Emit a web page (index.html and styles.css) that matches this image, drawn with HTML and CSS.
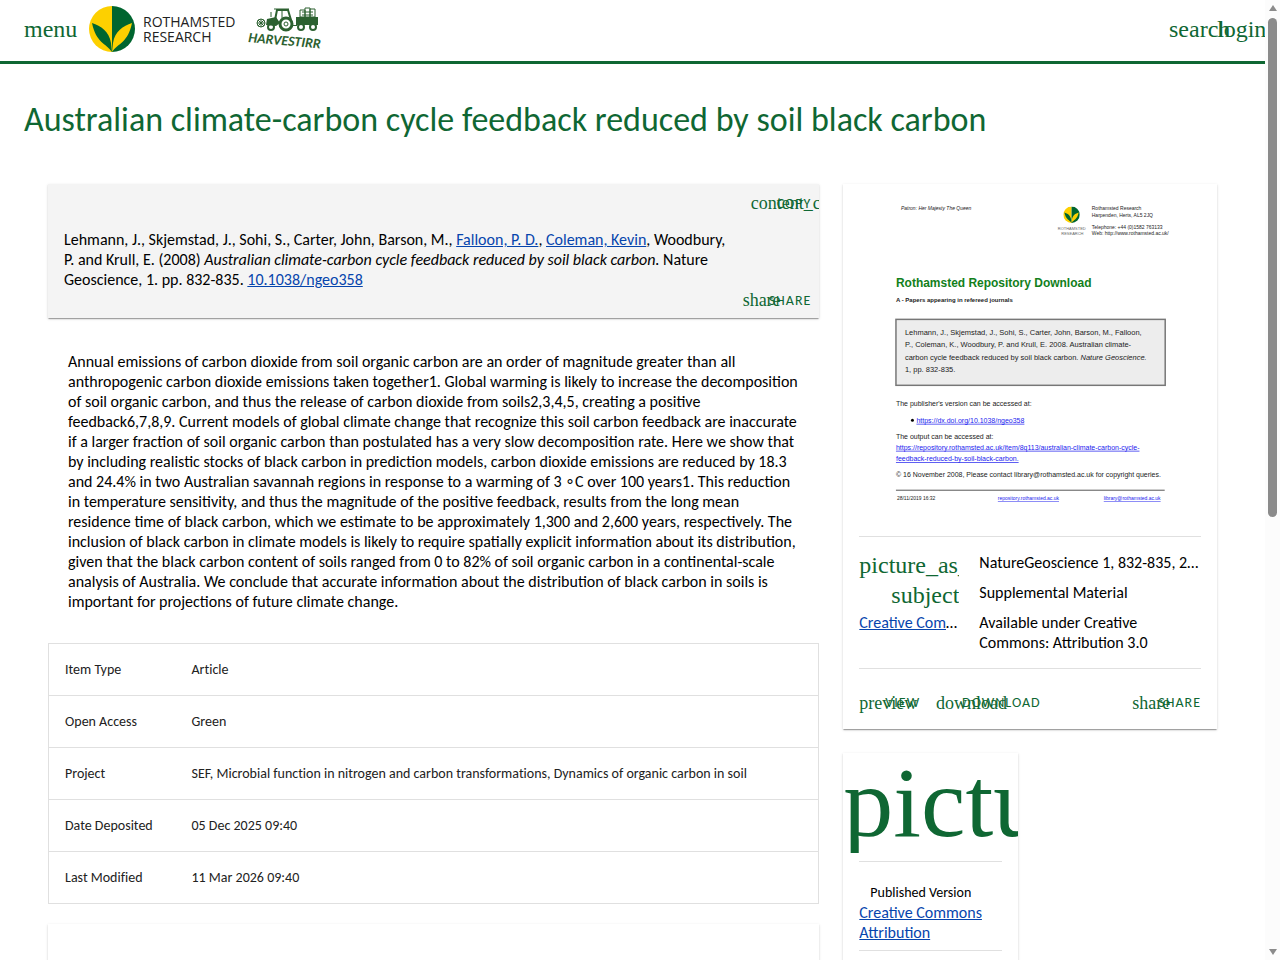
FILE: index.html
```
<!DOCTYPE html>
<html lang="en">
<head>
    <meta charset="UTF-8">
    <title>Australian climate-carbon cycle feedback reduced by soil black carbon</title>
    <link rel="stylesheet" href="styles.css">
</head>
<body>
<div class="page">
    <header class="top-bar">
        <button class="icon-button" aria-label="Menu"><span class="icon">menu</span></button>
        <a class="brand" href="#">
            <svg class="brand-mark" viewBox="0 0 46 46" aria-hidden="true">
                <path fill="#fdd000" d="M23 0a23 23 0 0 0 0 46z"/>
                <path fill="#00652f" d="M23 0a23 23 0 0 1 0 46z"/>
                <path fill="#00652f" d="M3 17c9 3 17 8 19 20l1 9C17 37 7 37 3 17z"/>
                <path fill="#fdd000" d="M43 17c-9 3-17 8-19 20l-1 9c6-9 16-9 20-29z"/>
            </svg>
            <span class="brand-name">ROTHAMSTED<br>RESEARCH</span>
        </a>
        <a class="harvest" href="#" aria-label="Harvestirr">
            <svg viewBox="0 0 72 44" aria-hidden="true">
                <g fill="none" stroke="#2c6130">
                    <path stroke-width="2" d="M28 13l2-10h11l3 10"/>
                    <path d="M27 2h15M35 3v8M24 5v5"/>
                    <circle cx="39" cy="17" r="6" stroke-width="3"/>
                    <circle cx="39" cy="17" r="2"/>
                    <circle cx="24" cy="20" r="3" stroke-width="2"/>
                    <circle cx="14" cy="16" r="4"/>
                    <path d="M10 16h8M14 12v8M11 13l6 6M17 13l-6 6"/>
                    <path d="M53 3h5v7h-5zM58 1h5v9h-5zM63 2h5v8h-5zM55 5h11M55 8h11"/>
                    <circle cx="54" cy="20" r="3" stroke-width="2"/>
                    <circle cx="66" cy="20" r="3" stroke-width="2"/>
                </g>
                <path fill="#2c6130" d="M20 12l9-2 4 6-4 3-10-1zM49 10h22v8H49zM44 18h6v1h-6z"/>
                <text class="harvest-text" x="1" y="35" transform="rotate(5 1 35)">HARVESTIRR</text>
            </svg>
        </a>
        <div class="spacer"></div>
        <button class="icon-button" aria-label="Search"><span class="icon">search</span></button>
        <button class="icon-button" aria-label="Login"><span class="icon">login</span></button>
    </header>

    <main>
        <h1>Australian climate-carbon cycle feedback reduced by soil black carbon</h1>

        <div class="grid">
            <div class="main-col">
                <section class="card citation">
                    <button class="button"><span class="icon">content_copy</span><span class="label">Copy</span></button>
                    <p>
                        Lehmann, J., Skjemstad, J., Sohi, S., Carter, John, Barson, M., <a href="#">Falloon, P. D.</a>, <a href="#">Coleman, Kevin</a>, Woodbury, P. and Krull, E. (2008) <em>Australian climate-carbon cycle feedback reduced by soil black carbon.</em> Nature Geoscience, 1. pp. 832-835. <a href="#">10.1038/ngeo358</a>
                    </p>
                    <button class="button"><span class="icon">share</span><span class="label">Share</span></button>
                </section>

                <p class="abstract">
                    Annual emissions of carbon dioxide from soil organic carbon are an order of magnitude greater than all anthropogenic carbon dioxide emissions taken together1. Global warming is likely to increase the decomposition of soil organic carbon, and thus the release of carbon dioxide from soils2,3,4,5, creating a positive feedback6,7,8,9. Current models of global climate change that recognize this soil carbon feedback are inaccurate if a larger fraction of soil organic carbon than postulated has a very slow decomposition rate. Here we show that by including realistic stocks of black carbon in prediction models, carbon dioxide emissions are reduced by 18.3 and 24.4% in two Australian savannah regions in response to a warming of 3 ∘C over 100 years1. This reduction in temperature sensitivity, and thus the magnitude of the positive feedback, results from the long mean residence time of black carbon, which we estimate to be approximately 1,300 and 2,600 years, respectively. The inclusion of black carbon in climate models is likely to require spatially explicit information about its distribution, given that the black carbon content of soils ranged from 0 to 82% of soil organic carbon in a continental-scale analysis of Australia. We conclude that accurate information about the distribution of black carbon in soils is important for projections of future climate change.
                </p>

                <table class="details">
                    <tr><th scope="row">Item Type</th><td>Article</td></tr>
                    <tr><th scope="row">Open Access</th><td>Green</td></tr>
                    <tr><th scope="row">Project</th><td>SEF, Microbial function in nitrogen and carbon transformations, Dynamics of organic carbon in soil</td></tr>
                    <tr><th scope="row">Date Deposited</th><td>05 Dec 2025 09:40</td></tr>
                    <tr><th scope="row">Last Modified</th><td>11 Mar 2026 09:40</td></tr>
                </table>

                <section class="card metrics"></section>
            </div>

            <div class="side-col">
                <section class="card document">
                    <svg class="cover" viewBox="0 0 748 704" role="img" aria-label="Cover page">
                        <g class="small">
                            <text x="116" y="53" font-style="italic">Patron: Her Majesty The Queen</text>
                            <text x="498" y="53">Rothamsted Research</text>
                            <text x="498" y="66">Harpenden, Herts, AL5 2JQ</text>
                            <text x="498" y="90">Telephone: +44 (0)1582 763133</text>
                            <text x="498" y="103">Web: http://www.rothamsted.ac.uk/</text>
                        </g>
                        <g class="tiny">
                            <text x="430" y="92">ROTHAMSTED</text>
                            <text x="437" y="102">RESEARCH</text>
                        </g>
                        <svg x="441" y="45" width="33" height="33" viewBox="0 0 46 46">
                            <path fill="#fdd000" d="M23 0a23 23 0 0 0 0 46z"/>
                            <path fill="#00652f" d="M23 0a23 23 0 0 1 0 46z"/>
                            <path fill="#00652f" d="M3 17c9 3 17 8 19 20l1 9C17 37 7 37 3 17z"/>
                            <path fill="#fdd000" d="M43 17c-9 3-17 8-19 20l-1 9c6-9 16-9 20-29z"/>
                        </svg>
                        <text class="cover-title" x="106" y="207">Rothamsted Repository Download</text>
                        <text class="cover-sub" x="106" y="237">A - Papers appearing in refereed journals</text>
                        <rect x="106" y="271" width="539" height="132" fill="#ededed" stroke="#777" stroke-width="3"/>
                        <g class="body">
                            <text x="124" y="303">Lehmann, J., Skjemstad, J., Sohi, S., Carter, John, Barson, M., Falloon,</text>
                            <text x="124" y="327">P., Coleman, K., Woodbury, P. and Krull, E. 2008. Australian climate-</text>
                            <text x="124" y="352">carbon cycle feedback reduced by soil black carbon. <tspan font-style="italic">Nature Geoscience.</tspan></text>
                            <text x="124" y="377">1, pp. 832-835.</text>
                        </g>
                        <g class="note">
                            <text x="106" y="444">The publisher's version can be accessed at:</text>
                            <circle cx="139" cy="473" r="3"/>
                            <text class="url" x="147" y="478">https://dx.doi.org/10.1038/ngeo358</text>
                            <text x="106" y="510">The output can be accessed at:</text>
                            <text class="url" x="106" y="532">https://repository.rothamsted.ac.uk/item/8q113/australian-climate-carbon-cycle-</text>
                            <text class="url" x="106" y="555">feedback-reduced-by-soil-black-carbon.</text>
                            <text x="106" y="587">© 16 November 2008, Please contact library@rothamsted.ac.uk for copyright queries.</text>
                        </g>
                        <path d="M106 613h538" stroke="#555" stroke-width="2"/>
                        <g class="small">
                            <text x="108" y="633">28/11/2019 16:32</text>
                            <text class="url" x="310" y="633">repository.rothamsted.ac.uk</text>
                            <text class="url" x="522" y="633">library@rothamsted.ac.uk</text>
                        </g>
                    </svg>
                    <hr>
                    <div class="files">
                        <a class="file-icon" href="#">picture_as_pdf</a>
                        <span class="ellipsis">NatureGeoscience 1, 832-835, 2008.pdf</span>
                        <a class="file-icon" href="#">subject</a>
                        <span>Supplemental Material</span>
                        <span class="ellipsis"><a href="#">Creative Com</a>mons: Attribution</span>
                        <span>Available under Creative Commons: Attribution 3.0</span>
                    </div>
                    <hr>
                    <div class="actions">
                        <button class="button"><span class="icon">preview</span><span class="label">View</span></button>
                        <button class="button"><span class="icon">download</span><span class="label">Download</span></button>
                        <div class="spacer"></div>
                        <button class="button"><span class="icon">share</span><span class="label">Share</span></button>
                    </div>
                </section>

                <section class="card version">
                    <div class="big-icon">picture_as_pdf</div>
                    <hr>
                    <div class="version-name">Published Version</div>
                    <a href="#">Creative Commons Attribution</a>
                    <hr>
                </section>
            </div>
        </div>
    </main>
</div>

<div class="scrollbar" aria-hidden="true">
    <svg viewBox="0 0 10 8"><path d="M5 1l4 6H1z"/></svg>
    <div class="thumb"></div>
    <svg viewBox="0 0 10 8"><path d="M5 7L1 1h8z"/></svg>
</div>
</body>
</html>
```
FILE: styles.css
```
* {
    box-sizing: border-box;
}

body {
    margin: 0;
    display: flex;
    height: 100vh;
    overflow: hidden;
    background-color: #fff;
    color: #000;
    font-family: Calibri, Carlito, Lato, sans-serif;
    font-size: 16px;
    line-height: 20px;
}

a {
    color: #0645ad;
}

.page {
    flex: 1;
    min-width: 0;
    overflow: hidden;
}

.spacer {
    flex: 1;
}

/* header */
.top-bar {
    display: flex;
    align-items: center;
    height: 64px;
    padding: 0 12px 3px;
    border-bottom: 3px solid #0f6733;
}

.icon-button {
    width: 48px;
    height: 48px;
    padding: 12px;
    border: none;
    background: none;
    text-align: left;
    cursor: pointer;
}

.icon {
    display: block;
    color: #0f6733;
    font-family: "Liberation Serif", serif;
    font-size: 24px;
    line-height: 24px;
    white-space: nowrap;
}

.icon-button .icon {
    width: 24px;
}

.brand {
    display: flex;
    align-items: center;
    gap: 8px;
    margin-left: 29px;
    color: #222;
    text-decoration: none;
}

.brand-mark {
    display: block;
    width: 46px;
    height: 46px;
}

.brand-name {
    font-family: "Open Sans", sans-serif;
    font-size: 14px;
    line-height: 15px;
}

.harvest {
    margin-left: 12px;
}

.harvest svg {
    display: block;
    width: 72px;
    height: 44px;
    overflow: visible;
}

.harvest-text {
    fill: #2c6130;
    font-size: 14px;
    font-style: italic;
    font-weight: bold;
}

/* content */
main {
    padding: 0 24px;
}

h1 {
    margin: 36px 0 0;
    color: #0f6733;
    font-size: 34px;
    font-weight: normal;
    line-height: 40px;
    font-variant-ligatures: none;
}

.grid {
    display: grid;
    grid-template-columns: repeat(12, 1fr);
    gap: 24px;
    padding: 44px 24px 24px;
}

.main-col {
    grid-column: span 8;
}

.side-col {
    grid-column: span 4;
    display: grid;
    grid-template-columns: 1fr 1fr;
    gap: 24px;
    align-content: start;
}

.card {
    overflow: hidden;
    background-color: #fff;
    box-shadow: 0 2px 1px -1px rgba(0, 0, 0, 0.2), 0 1px 1px rgba(0, 0, 0, 0.14), 0 1px 3px rgba(0, 0, 0, 0.12);
}

.citation {
    display: flex;
    flex-direction: column;
    align-items: flex-end;
    padding: 9px 0 8px;
    background-color: #f4f4f4;
}

.citation p {
    align-self: stretch;
    margin: 17px 86px 0 16px;
}

.button {
    display: flex;
    align-items: center;
    gap: 8px;
    height: 36px;
    padding: 0 8px;
    border: none;
    background: none;
    color: #0f6733;
    font-family: inherit;
    font-size: 14px;
    text-transform: uppercase;
    letter-spacing: 1px;
    cursor: pointer;
}

.citation .button {
    height: 20px;
}

.button .icon {
    width: 18px;
    font-size: 18px;
    line-height: 18px;
    letter-spacing: normal;
    text-transform: none;
}

.abstract {
    margin: 34px 20px 31px;
}

.details {
    width: 100%;
    border: 1px solid #e0e0e0;
    border-collapse: collapse;
    color: #222;
    font-size: 14px;
    font-variant-ligatures: none;
}

.details th,
.details td {
    height: 52px;
    padding: 0 16px;
    border-top: 1px solid #e0e0e0;
    font-weight: normal;
    text-align: left;
}

.details th {
    width: 127px;
    padding-right: 0;
    white-space: nowrap;
}

.metrics {
    height: 200px;
    margin-top: 20px;
}

/* side cards */
hr {
    margin: 0;
    border: none;
    border-top: 1px solid #e0e0e0;
}

.document {
    grid-column: span 2;
    padding-bottom: 8px;
}

.document hr,
.version hr {
    margin: 0 16px;
}

.cover {
    display: block;
    width: 100%;
}

.cover text {
    font-family: "Liberation Sans", sans-serif;
    fill: #222;
}

.cover .small text {
    font-size: 10px;
}

.cover .tiny text {
    fill: #666;
    font-size: 8px;
}

.cover .body text {
    font-size: 15px;
}

.cover .note text {
    font-size: 14px;
}

.cover .cover-title {
    fill: #12801b;
    font-size: 24px;
    font-weight: bold;
}

.cover .cover-sub {
    font-size: 12px;
    font-weight: bold;
}

.cover .url {
    fill: #1a1aee;
    text-decoration: underline;
}

.files {
    display: grid;
    grid-template-columns: 100px 1fr;
    gap: 10px 20px;
    padding: 16px 16px 15px;
}

.file-icon {
    justify-self: end;
    max-width: 100%;
    height: 20px;
    overflow-x: clip;
    color: #0f6733;
    font-family: "Liberation Serif", serif;
    font-size: 24px;
    line-height: 24px;
    text-decoration: none;
}

.ellipsis {
    overflow: hidden;
    text-overflow: ellipsis;
    white-space: nowrap;
}

.actions {
    display: flex;
    padding: 16px 8px 0;
}

.version {
    height: 240px;
}

.big-icon {
    height: 100px;
    margin-bottom: 8px;
    overflow: hidden;
    color: #0f6733;
    font-family: "Liberation Serif", serif;
    font-size: 100px;
    line-height: 100px;
}

.version-name {
    padding: 21px 16px 0 27px;
    font-size: 14px;
}

.version a {
    display: block;
    margin: 0 16px 7px;
}

.scrollbar {
    display: flex;
    flex-direction: column;
    align-items: center;
    width: 15px;
    padding: 4px 0;
    background-color: #fcfcfc;
}

.scrollbar svg {
    width: 10px;
    height: 8px;
    fill: #8b8b8b;
}

.thumb {
    width: 9px;
    height: 52vh;
    margin: 6px 0 auto;
    border-radius: 5px;
    background-color: #8b8b8b;
}
```
